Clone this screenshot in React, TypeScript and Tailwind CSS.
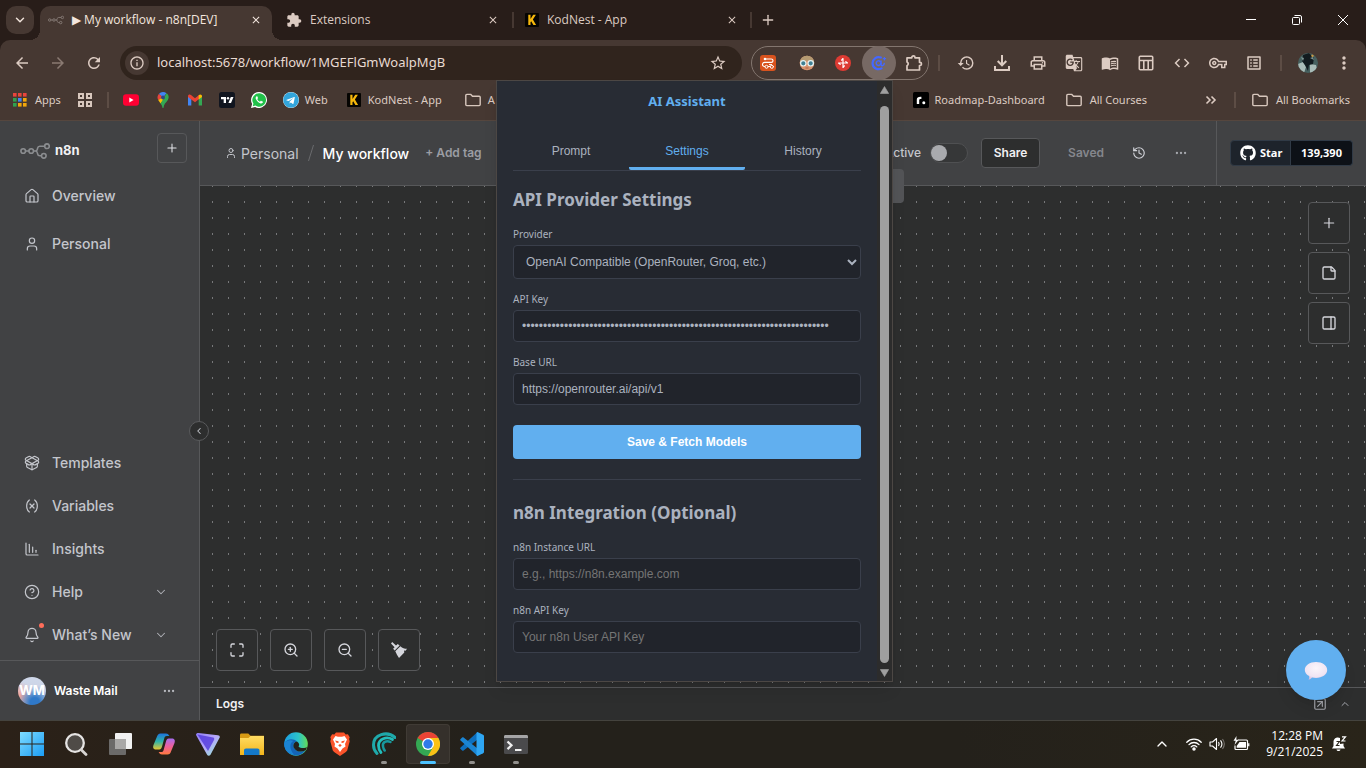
import type { ComponentType, ReactNode } from 'react';
import {
  Bell,
  ChartColumnDecreasing,
  ChevronDown,
  ChevronLeft,
  ChevronUp,
  CircleHelp,
  Ellipsis,
  History,
  House,
  Maximize,
  PackageOpen,
  PanelRight,
  Plus,
  SquareArrowUpRight,
  StickyNote,
  User,
  Variable,
  ZoomIn,
  ZoomOut,
} from 'lucide-react';
import {
  MdArrowBack,
  MdArrowForward,
  MdClose,
  MdCode,
  MdExtension,
  MdGTranslate,
  MdHistory,
  MdInfoOutline,
  MdMoreVert,
  MdOutlineListAlt,
  MdOutlineMenuBook,
  MdOutlinePrint,
  MdOutlineVpnKey,
  MdRefresh,
  MdStarBorder,
} from 'react-icons/md';
import { FaGithub, FaTelegram } from 'react-icons/fa';

/* ---------- shared drawings ---------- */

function N8nMark({ className }: { className: string }) {
  return (
    <svg className={className} viewBox="0 0 30 16" fill="none" stroke="currentColor" strokeWidth="1.6" aria-hidden="true">
      <circle cx="3.2" cy="8" r="2.3" />
      <circle cx="11.2" cy="8" r="2.3" />
      <circle cx="27" cy="3.2" r="2.3" />
      <circle cx="23.8" cy="12.8" r="2.3" />
      <path d="M5.5 8h3.4M13.5 8h1.7c1.4 0 2-.7 2.2-1.9l.2-1c.2-1.2 1-1.9 2.2-1.9h4.9M15.2 8c1.4 0 2 .7 2.2 1.9l.2 1c.2 1.2 1 1.9 2.2 1.9h1.7" />
    </svg>
  );
}

function KodNest({ className }: { className: string }) {
  return (
    <svg className={className} viewBox="0 0 14 14" aria-hidden="true">
      <rect width="14" height="14" rx="1" fill="#050402" />
      <path d="M3.3 1.8h2.2v4.3l2.7-4.3h2.7L7.9 6.600l3.200 5.500H8.400L6.200 8.200l-.7 1v2.900H3.300z" fill="#f5b70c" />
    </svg>
  );
}

function Folder() {
  return (
    <svg className="h-4 w-4 shrink-0" viewBox="0 0 16 16" fill="none" stroke="#d8c7bd" strokeWidth="1.4" aria-hidden="true">
      <path d="M.8 3.400c0-.6.4-1 1-1h4l1.700 1.800h6.700c.6 0 1 .4 1 1v7.400c0 .6-.4 1-1 1H1.800c-.6 0-1-.4-1-1z" />
    </svg>
  );
}

/* ---------- browser chrome ---------- */

function TabStrip() {
  return (
    <div className="flex h-10 items-start bg-[#281d19] pl-1.5 pt-1.5 text-[#dccbc2]">
      <button aria-label="Search tabs" className="flex h-7 w-7 items-center justify-center rounded-[10px] bg-[#463832] text-[#efe2da]">
        <ChevronDown className="h-3.5 w-3.5" strokeWidth={2.5} />
      </button>
      <div className="relative ml-1.5 flex h-[34px] w-[232px] items-center rounded-t-[10px] bg-[#463832] pb-1.5 pl-2 pr-2.5 before:absolute before:-left-2.5 before:bottom-0 before:size-2.5 before:bg-[radial-gradient(circle_at_0_0,transparent_10px,#463832_10px)] after:absolute after:-right-2.5 after:bottom-0 after:size-2.5 after:bg-[radial-gradient(circle_at_100%_0,transparent_10px,#463832_10px)]">
        <N8nMark className="h-4 w-4 text-[#8b807b]" />
        <span className="ml-2 flex-1 whitespace-nowrap text-[#f3e6df]">▶ My workflow - n8n[DEV]</span>
        <button aria-label="Close tab" className="text-[#f3e6df]"><MdClose className="h-3 w-3" /></button>
      </div>
      <div className="flex h-7 w-[242px] items-center">
        <MdExtension className="ml-3.5 h-4 w-4" />
        <span className="ml-2 flex-1">Extensions</span>
        <button aria-label="Close tab" className="mr-[13px]"><MdClose className="h-3 w-3" /></button>
        <span className="h-4 w-0.5 bg-[#463832]" />
      </div>
      <div className="flex h-7 w-[238px] items-center">
        <KodNest className="ml-[11px] h-3.5 w-3.5" />
        <span className="ml-2 flex-1">KodNest - App</span>
        <button aria-label="Close tab" className="mr-3"><MdClose className="h-3 w-3" /></button>
        <span className="h-4 w-0.5 bg-[#463832]" />
      </div>
      <button aria-label="New tab" className="flex h-7 w-8 items-center justify-center">
        <Plus className="h-4 w-4" />
      </button>
      <div className="ml-auto flex h-7 text-white">
        <button aria-label="Minimize" className="flex w-[46px] items-center justify-center">
          <svg className="h-2.5 w-2.5" viewBox="0 0 10 10" stroke="currentColor"><path d="M0 4.5h10" /></svg>
        </button>
        <button aria-label="Restore" className="flex w-[46px] items-center justify-center">
          <svg className="h-2.5 w-2.5" viewBox="0 0 10 10" fill="none" stroke="currentColor">
            <rect x=".5" y="2.5" width="7" height="7" rx="1" />
            <path d="M2.5.5H8A1.5 1.5 0 0 1 9.5 2v5.500" />
          </svg>
        </button>
        <button aria-label="Close window" className="flex w-[46px] items-center justify-center">
          <svg className="h-2.5 w-2.5" viewBox="0 0 10 10" stroke="currentColor"><path d="M0 0l10 10M10 0L0 10" /></svg>
        </button>
      </div>
    </div>
  );
}

function ToolButton({ label, children }: { label: string; children: ReactNode }) {
  return (
    <button aria-label={label} className="flex h-9 w-9 shrink-0 items-center justify-center">
      {children}
    </button>
  );
}

function DownloadTray({ className }: { className?: string }) {
  return (
    <svg className={className} viewBox="0 0 18 18" fill="none" stroke="currentColor" strokeWidth="2">
      <path d="M9 1v10M4.700 7L9 11.300 13.300 7M2 12v4h14v-4" />
    </svg>
  );
}

function TableLayout({ className }: { className?: string }) {
  return (
    <svg className={className} viewBox="0 0 18 18" fill="none" stroke="currentColor" strokeWidth="1.600">
      <rect x="2.300" y="2.300" width="13.400" height="13.400" rx="1" />
      <path d="M2 6.500h14M6.800 6.500V16M11.200 6.500V16" />
    </svg>
  );
}

const pinned: [string, ComponentType<{ className?: string }>][] = [
  ['History', MdHistory],
  ['Downloads', DownloadTray],
  ['Print', MdOutlinePrint],
  ['Translate', MdGTranslate],
  ['Reading mode', MdOutlineMenuBook],
  ['Layout', TableLayout],
  ['Developer tools', MdCode],
  ['Passwords', MdOutlineVpnKey],
  ['Reading list', MdOutlineListAlt],
];

function Toolbar() {
  return (
    <div className="bg-[#281d19]">
      <div className="flex h-[46px] items-center rounded-t-[10px] bg-[#463832] px-1 text-[#dccbc2]">
        <ToolButton label="Back"><MdArrowBack className="h-[18px] w-[18px]" /></ToolButton>
        <ToolButton label="Forward"><MdArrowForward className="h-[18px] w-[18px] text-[#8a7a72]" /></ToolButton>
        <ToolButton label="Reload"><MdRefresh className="h-[18px] w-[18px]" /></ToolButton>
        <div className="ml-2 flex h-[34px] flex-1 items-center rounded-full bg-[#30241d] pl-[5px] pr-[15px]">
          <button aria-label="Site information" className="flex h-6 w-6 items-center justify-center rounded-full bg-[#463832]">
            <MdInfoOutline className="h-4 w-4" />
          </button>
          <input
            aria-label="Address"
            className="ml-2 min-w-0 flex-1 bg-transparent font-['Noto_Sans',sans-serif] text-[13px] text-[#e8dad2] outline-none"
            defaultValue="localhost:5678/workflow/1MGEFlGmWoalpMgB"
          />
          <button aria-label="Bookmark"><MdStarBorder className="h-[18px] w-[18px]" /></button>
        </div>
        <div className="ml-[9px] flex h-[34px] w-[178px] items-center rounded-full border border-[#83766f] pl-px">
          <button aria-label="Workflow extension" className="flex flex-1 pl-[7px]">
            <svg className="h-4 w-4" viewBox="0 0 16 16" fill="none">
              <rect width="16" height="16" rx="3" fill="#d9531e" />
              <path d="M5 4h6.300a1.700 1.700 0 0 1 0 3.400H4.500a2 2 0 0 0 0 4.100h9.500" stroke="#fff" strokeWidth="1.100" />
              <circle cx="5" cy="4" r="1.300" fill="#fff" />
              <circle cx="6.500" cy="11.800" r="1.500" stroke="#fff" fill="#d9531e" />
              <circle cx="11.800" cy="11.800" r="1.500" stroke="#fff" fill="#d9531e" />
              <path d="M9 9.600h3" stroke="#fff" />
            </svg>
          </button>
          <button aria-label="Goggles extension" className="flex w-9 shrink-0 justify-center">
            <svg className="h-4 w-4" viewBox="0 0 16 16">
              <circle cx="8" cy="8" r="7.300" fill="#d8946f" />
              <path d="M.7 8a7.300 7.300 0 0 1 14.600 0c-4-3-10.600-3-14.600 0z" fill="#b49a72" />
              <circle cx="4.300" cy="8.300" r="2.700" fill="#3f7f93" stroke="#e6f3f4" strokeWidth="1.200" />
              <circle cx="11.700" cy="8.300" r="2.700" fill="#3f7f93" stroke="#e6f3f4" strokeWidth="1.200" />
              <path d="M6.500 13h3" stroke="#a65f45" />
            </svg>
          </button>
          <button aria-label="Fan extension" className="flex w-9 shrink-0 justify-center">
            <svg className="h-4 w-4" viewBox="0 0 16 16">
              <circle cx="8" cy="8" r="8" fill="#dd3b33" />
              <g fill="none" stroke="#fff" strokeWidth="1.200" strokeLinecap="round" strokeLinejoin="round">
                <path d="M8 8V3.500L6.600 5.200M8 8h4.500l-1.700-1.400M8 8v4.500l1.400-1.700M8 8H3.500l1.700 1.400" />
              </g>
            </svg>
          </button>
          <button aria-label="AI Assistant extension" className="flex w-9 shrink-0 justify-center">
            <span className="-my-px flex h-[34px] w-[34px] items-center justify-center rounded-full bg-[#776964]">
              <svg className="h-4 w-4" viewBox="0 0 16 16" fill="none" stroke="#4468ff" strokeLinecap="round">
                <path d="M10.500 13.400A6 6 0 1 1 9.800 2.600" strokeWidth="2.200" />
                <path d="M10 6v3.600c.3 1.700 3 1.400 3.200-1.100" strokeWidth="1.500" />
                <path d="M9.800 8.200a2.300 2.300 0 1 1-.7-1.700" strokeWidth="1.500" />
                <path d="M13.400 2.500v2.400M12.200 3.700h2.400" strokeWidth="1.200" />
              </svg>
            </span>
          </button>
          <button aria-label="Extensions" className="flex flex-1 justify-center pl-0.5">
            <svg className="h-[18px] w-[18px]" viewBox="0 0 18 18" fill="none" stroke="currentColor" strokeWidth="1.700" strokeLinejoin="round">
              <path d="M2 3.800h4.800V3.400a1.600 1.600 0 0 1 3.200 0v.4h4.500v4.500h.4a1.600 1.600 0 0 1 0 3.200h-.4v4.500H2v-4.300a2 2 0 0 0 0-3.700z" />
            </svg>
          </button>
        </div>
        <span className="ml-[9px] mr-2 h-4 w-0.5 shrink-0 bg-[#5d4d45]" />
        {pinned.map(([label, Icon]) => (
          <ToolButton key={label} label={label}><Icon className="h-[18px] w-[18px]" /></ToolButton>
        ))}
        <span className="mx-2 h-4 w-0.5 shrink-0 bg-[#5d4d45]" />
        <ToolButton label="Profile">
          <svg className="h-5 w-5 rounded-full" viewBox="0 0 20 20">
            <rect width="20" height="20" fill="#46605f" />
            <path d="M0 11l5-2 3 5-2 6H0zM12 11l6 1 2 8h-8z" fill="#a9bcb8" />
            <path d="M5 2l6-2 5 5-1 6-4 1-1 6-3-6-3-4z" fill="#121b1f" />
            <path d="M3 4l3 1-1 3zM12 5l3-1 1 3z" fill="#7d9693" />
            <circle cx="14.5" cy="2.800" r="1.200" fill="#c99a46" />
          </svg>
        </ToolButton>
        <ToolButton label="Menu"><MdMoreVert className="h-5 w-5" /></ToolButton>
      </div>
    </div>
  );
}

const appDots = ['#e8453c', '#e8453c', '#e8453c', '#2fa24f', '#4285f4', '#f2a60c', '#2fa24f', '#f2a60c', '#f2a60c'];

function BookmarksBar() {
  return (
    <nav aria-label="Bookmarks" className="flex h-[35px] items-center border-b border-[#55463e] bg-[#463832] pb-1.5 pl-[13px] pr-4 font-['Noto_Sans',sans-serif] text-[11px] text-[#dccbc2]">
      <a href="#apps" className="flex items-center gap-2">
        <svg className="h-3.5 w-3.5" viewBox="0 0 14 14">
          {appDots.map((fill, i) => (
            <rect key={i} x={(i % 3) * 5} y={Math.floor(i / 3) * 5} width="3.600" height="3.600" fill={fill} />
          ))}
        </svg>
        Apps
      </a>
      <button aria-label="Tab groups" className="ml-4">
        <svg className="h-4 w-4" viewBox="0 0 16 16" fill="none" stroke="#d8c7bd" strokeWidth="2">
          <rect x="2" y="2" width="4" height="4" />
          <rect x="10" y="2" width="4" height="4" />
          <rect x="2" y="10" width="4" height="4" />
          <rect x="10" y="10" width="4" height="4" />
        </svg>
      </button>
      <span className="mx-3.5 h-4 w-0.5 bg-[#5d4d45]" />
      <div className="flex items-center gap-4">
        <a href="#youtube" aria-label="YouTube">
          <svg className="h-4 w-4" viewBox="0 0 16 16"><rect y="2.200" width="16" height="11.600" rx="3" fill="#ff0033" /><path d="M6.300 5.500v5l4.300-2.500z" fill="#fff" /></svg>
        </a>
        <a href="#maps" aria-label="Maps">
          <svg className="h-4 w-4" viewBox="0 0 16 16">
            <path d="M8 0a5.500 5.500 0 0 0-4.200 2L8 5.500l3.500-4.200A5.500 5.500 0 0 0 8 0z" fill="#4285f4" />
            <path d="M3.800 2a5.500 5.500 0 0 0-.6 6L8 5z" fill="#e8453c" />
            <path d="M3.200 8c.7 1.300 1.600 2.200 2.400 3.400L11.800 4 8 5z" fill="#fbbc04" />
            <path d="M11.500 1.300c3 2 2.400 5.200 1 7.200C10.700 11 9 12 8.600 15.400c-.2.800-1 .8-1.200 0-.3-1.700-.9-2.700-1.800-4z" fill="#34a853" />
            <circle cx="8" cy="5.400" r="2" fill="#2c4a86" />
          </svg>
        </a>
        <a href="#mail" aria-label="Gmail">
          <svg className="h-4 w-4" viewBox="0 0 16 16">
            <path d="M1 4v9.500h3.300V7z" fill="#4285f4" />
            <path d="M15 4v9.500h-3.300V7z" fill="#34a853" />
            <path d="M1 4.300C1 2.500 2.700 2 4 3l4 3.200L12 3v4L8 10.200 1 5z" fill="#ea4335" />
            <path d="M11.700 3.200C13.200 2 15 2.700 15 4.500V5l-3.300 2.500z" fill="#fbbc04" />
          </svg>
        </a>
        <a href="#tradingview" aria-label="TradingView">
          <svg className="h-4 w-4" viewBox="0 0 16 16"><rect width="16" height="16" rx="2.500" fill="#11151f" /><path d="M2 5h5v6H4.700V7.300H2zM11.800 5h2.700l-2.500 6H9.400z" fill="#fff" /><circle cx="9" cy="6.200" r="1.200" fill="#fff" /></svg>
        </a>
        <a href="#whatsapp" aria-label="WhatsApp">
          <svg className="h-4 w-4" viewBox="0 0 16 16">
            <path d="M8 0a8 8 0 0 0-6.900 12L0 16l4.100-1A8 8 0 1 0 8 0z" fill="#fff" />
            <path d="M8 1.300a6.700 6.700 0 0 0-5.600 10.300l-.6 2.600 2.700-.7A6.700 6.700 0 1 0 8 1.300z" fill="#22c14a" />
            <path d="M5.700 4.200c-1 .5-1.300 1.600-.8 2.800.8 1.900 2.300 3.400 4.200 4.200 1.300.5 2.400.1 2.800-.9.1-.4 0-.6-.3-.8l-1.300-.6c-.3-.2-.5-.1-.7.1l-.6.7C7.700 9.200 6.800 8.300 6.300 7l.5-.6c.2-.2.2-.4.1-.7l-.5-1.200c-.2-.3-.4-.4-.7-.3z" fill="#fff" />
          </svg>
        </a>
      </div>
      <a href="#web" className="ml-4 flex items-center gap-1.5">
        <span className="rounded-full bg-white"><FaTelegram className="h-4 w-4 text-[#32a5dc]" /></span>
        Web
      </a>
      <a href="#kodnest" className="ml-[19px] flex items-center gap-[7px]">
        <KodNest className="h-3.5 w-3.5" />
        KodNest - App
      </a>
      <a href="#folder" className="ml-[23px] flex items-center gap-[7px]"><Folder />A</a>
      <a href="#roadmap" className="ml-auto flex items-center gap-1.5">
        <svg className="h-4 w-4" viewBox="0 0 16 16"><rect width="16" height="16" rx="1.500" fill="#000" /><path d="M3.800 12V7.500c0-2.300 1.700-3 4.600-2.800v2.200c-1.500-.1-2.200.2-2.200 1.300V12z" fill="#fff" /><circle cx="10.800" cy="10.700" r="1.500" fill="#fff" /></svg>
        Roadmap-Dashboard
      </a>
      <a href="#courses" className="ml-[21px] flex items-center gap-2"><Folder />All Courses</a>
      <button aria-label="More bookmarks" className="ml-[57px] flex">
        <svg className="h-3.5 w-3.5" viewBox="0 0 14 14" fill="none" stroke="currentColor" strokeWidth="1.600"><path d="M2.500 3.500L6 7l-3.500 3.500M7.500 3.500L11 7l-3.500 3.500" /></svg>
      </button>
      <span className="mx-4 h-4 w-0.5 bg-[#5d4d45]" />
      <a href="#all" className="flex items-center gap-2"><Folder />All Bookmarks</a>
    </nav>
  );
}

/* ---------- n8n page ---------- */

type Item = { label: string; icon: ComponentType<{ className?: string; strokeWidth?: number }>; more?: boolean; badge?: boolean };

const topItems: Item[] = [
  { label: 'Overview', icon: House },
  { label: 'Personal', icon: User },
];
const bottomItems: Item[] = [
  { label: 'Templates', icon: PackageOpen },
  { label: 'Variables', icon: Variable },
  { label: 'Insights', icon: ChartColumnDecreasing },
  { label: 'Help', icon: CircleHelp, more: true },
  { label: 'What’s New', icon: Bell, more: true, badge: true },
];

function NavItem({ item }: { item: Item }) {
  const Icon = item.icon;
  return (
    <a href={'#' + item.label} className="flex items-center pl-6 pr-[31px] text-[14px] leading-5 font-medium text-[#c4c6cc]">
      <span className="relative mr-3">
        <Icon className="h-4 w-4" strokeWidth={1.8} />
        {item.badge && <span className="absolute -right-1 -top-1 h-[5px] w-[5px] rounded-full bg-[#ff6d5a]" />}
      </span>
      {item.label}
      {item.more && <ChevronDown className="ml-auto h-3.5 w-3.5 text-[#b0b2b8]" strokeWidth={1.8} />}
    </a>
  );
}

function Sidebar() {
  return (
    <aside className="relative flex w-[200px] shrink-0 flex-col border-r border-[#57585a] bg-[#414244]">
      <div className="flex items-center pl-5 pr-3 pt-3">
        <a href="#home" className="flex items-center gap-[5px] pt-1.5 text-[13px] font-bold text-[#f2f2f4]">
          <N8nMark className="h-4 w-[30px] text-[#8b8d90]" />
          n8n
        </a>
        <button aria-label="Create" className="ml-auto flex h-[30px] w-[30px] items-center justify-center rounded-sm border border-[#57585a] text-[#e3e4e8]">
          <Plus className="h-3.5 w-3.5" strokeWidth={1.8} />
        </button>
      </div>
      <nav aria-label="Projects" className="mt-[23px] flex flex-col gap-7">
        {topItems.map((item) => <NavItem key={item.label} item={item} />)}
      </nav>
      <nav aria-label="Resources" className="mb-[15px] mt-auto flex flex-col gap-[23px]">
        {bottomItems.map((item) => <NavItem key={item.label} item={item} />)}
      </nav>
      <div className="flex h-[60px] items-center border-t border-[#57585a] pl-[18px] pr-[23px] text-[12px] font-semibold text-white">
        <span className="flex h-7 w-7 items-center justify-center rounded-full bg-[radial-gradient(circle_at_60%_90%,#2f78c8_15%,transparent_55%),radial-gradient(circle_at_5%_70%,#f2a9a0_5%,transparent_45%),linear-gradient(#cfd8ea,#c7cde0)] text-[13px] font-bold">WM</span>
        <span className="ml-2">Waste Mail</span>
        <button aria-label="User menu" className="ml-auto text-[#b5b7bd]"><Ellipsis className="h-3.5 w-3.5" /></button>
      </div>
      <button aria-label="Collapse sidebar" className="absolute -right-2.5 top-[300px] z-10 flex h-5 w-5 items-center justify-center rounded-full border border-[#5a5b5d] bg-[#2d2e2e] text-[#c4c6cc]">
        <ChevronLeft className="h-2.5 w-2.5" strokeWidth={2.5} />
      </button>
    </aside>
  );
}

function WorkflowHeader() {
  return (
    <header className="flex h-[65px] items-center border-b border-[#57585a] bg-[#414244] pl-[25px] text-[#c4c6cc]">
      <a href="#personal" className="flex items-center gap-1 text-[14px]">
        <User className="h-3 w-3" />
        Personal
      </a>
      <svg className="ml-[9px] h-4 w-[6px]" viewBox="0 0 6 16" stroke="#6a6b6e"><path d="M5.500 0L.5 16" /></svg>
      <h1 className="ml-[9px] text-[14px] font-medium text-white">My workflow</h1>
      <button className="ml-4 text-[12px] font-semibold text-[#9b9da3]">+ Add tag</button>
      <div className="ml-auto flex h-full items-center text-[12px] font-semibold">
        <label htmlFor="active" className="mr-[9px] font-medium">Active</label>
        <span className="relative flex h-5 w-[38px] items-center rounded-full border border-[#4f5052] bg-[#363738]">
          <input id="active" type="checkbox" className="absolute inset-0 cursor-pointer appearance-none rounded-full" />
          <span className="h-4 w-4 rounded-full bg-[#a9aaae]" />
        </span>
        <button className="ml-[13px] h-[30px] w-[59px] rounded-sm border border-[#57585a] bg-[#2d2e2e] text-[#f0f0f2]">Share</button>
        <span className="ml-7 text-[#85878d]">Saved</span>
        <button aria-label="Workflow history" className="ml-7 text-[#d0d2d8]"><History className="h-3.5 w-3.5" /></button>
        <button aria-label="Workflow menu" className="ml-7 text-[#a5a7ad]"><Ellipsis className="h-3.5 w-3.5" /></button>
        <div className="ml-7 flex h-full items-center border-l border-[#57585a] px-[13px] font-['Noto_Sans',sans-serif] text-[11px] font-bold text-white">
          <a href="#star" className="flex h-[26px] w-[61px] items-center gap-1 rounded-l-sm border border-[#303a46] bg-[#1d232b] pl-[9px]">
            <FaGithub className="h-4 w-4" />
            Star
          </a>
          <a href="#stars" className="flex h-[26px] w-[62px] items-center justify-center rounded-r-sm border border-l-0 border-[#303a46] bg-[#0d1117]">139,390</a>
        </div>
      </div>
    </header>
  );
}

function SquareButton({ label, children }: { label: string; children: ReactNode }) {
  return (
    <button aria-label={label} className="flex h-[42px] w-[42px] items-center justify-center rounded-sm border border-[#57585a] bg-[#2d2e2e] text-[#d5d6dc]">
      {children}
    </button>
  );
}

function Canvas() {
  return (
    <section aria-label="Canvas" className="relative flex flex-1 flex-col justify-between bg-[#2d2e2e] p-4">
      <svg className="absolute inset-0 h-full w-full" aria-hidden="true">
        <defs>
          <pattern id="dots" width="16" height="16" patternUnits="userSpaceOnUse">
            <rect x="12" y="15" width="1" height="1" fill="#77787a" />
            <rect x="12" y="0" width="1" height="1" fill="#77787a" />
          </pattern>
        </defs>
        <rect width="100%" height="100%" fill="url(#dots)" />
      </svg>
      <div className="absolute -top-[17px] left-1/2 h-[34px] w-[242px] -translate-x-1/2 rounded bg-[#535457]" />
      <div className="relative flex flex-col gap-2 self-end">
        <SquareButton label="Add node"><Plus className="h-4 w-4" strokeWidth={1.8} /></SquareButton>
        <SquareButton label="Add sticky note"><StickyNote className="h-4 w-4" /></SquareButton>
        <SquareButton label="Toggle panel"><PanelRight className="h-4 w-4" /></SquareButton>
      </div>
      <div className="relative flex gap-3">
        <SquareButton label="Fit view"><Maximize className="h-4 w-4" /></SquareButton>
        <SquareButton label="Zoom in"><ZoomIn className="h-4 w-4" /></SquareButton>
        <SquareButton label="Zoom out"><ZoomOut className="h-4 w-4" /></SquareButton>
        <SquareButton label="Tidy up">
          <svg className="h-4 w-4" viewBox="0 0 16 16" fill="currentColor">
            <path d="M1.200 0L5 3.600 6.800 1.900 8.600 3.500 3.700 8.400 2.100 6.700l1.500-1.500L0 1.400z" />
            <path d="M9.400 4.200c2 1.900 4 2.600 6.600 2.600l-1.400 2-1.600-.2.300 1.900L8 16c-1.500-2-2.700-4.200-3.700-6.800z" />
          </svg>
        </SquareButton>
      </div>
    </section>
  );
}

/* ---------- extension popup ---------- */

const fieldClass =
  'h-8 w-full rounded border border-[#3a3f4b] bg-[#21242b] px-2 font-["Liberation_Sans",Arial,sans-serif] text-[12px] text-[#abb2bf] outline-none placeholder:text-[#757575]';

function Field({ id, label, type = 'text', value, placeholder }: { id: string; label: string; type?: string; value?: string; placeholder?: string }) {
  return (
    <div className="mt-3">
      <label htmlFor={id} className="mb-[3px] block text-[10px] leading-4">{label}</label>
      <input id={id} type={type} defaultValue={value} placeholder={placeholder} className={fieldClass} />
    </div>
  );
}

function AssistantPopup() {
  const tab = 'h-[39px] flex-1 rounded-b-[2px] border-b-[3px] pt-1';
  return (
    <div className="absolute left-[496px] top-20 z-20 flex w-[397px] border border-[#4c4744] bg-[#282c34] font-['Noto_Sans',sans-serif] text-[#abb2bf] shadow-lg">
      <div className="flex-1 px-4 pb-7 pt-2.5">
        <h2 className="text-center text-[13px] leading-5 font-bold text-[#61afef]">AI Assistant</h2>
        <div className="mt-5 flex border-b border-[#3a3f4b] font-['Liberation_Sans',Arial,sans-serif] text-[12px]">
          <button className={tab + ' border-transparent'}>Prompt</button>
          <button className={tab + ' border-[#61afef] text-[#61afef]'}>Settings</button>
          <button className={tab + ' border-transparent'}>History</button>
        </div>
        <h3 className="mt-[17px] text-[17px] leading-6 font-bold">API Provider Settings</h3>
        <div className="mt-3.5">
          <label htmlFor="provider" className="mb-[3px] block text-[10px] leading-4">Provider</label>
          <select id="provider" className="h-[34px] w-full rounded border border-[#3a3f4b] bg-[#21242b] px-2 font-['Liberation_Sans',Arial,sans-serif] text-[12px] text-[#abb2bf]">
            <option>OpenAI Compatible (OpenRouter, Groq, etc.)</option>
          </select>
        </div>
        <Field id="key" label="API Key" type="password" value={'x'.repeat(73)} />
        <Field id="base" label="Base URL" value="https://openrouter.ai/api/v1" />
        <button className="mt-5 h-[34px] w-full rounded bg-[#61afef] font-['Liberation_Sans',Arial,sans-serif] text-[12px] font-bold text-white">Save &amp; Fetch Models</button>
        <hr className="mt-5 border-[#3a3f4b]" />
        <h3 className="mb-3.5 mt-[21px] text-[17px] leading-6 font-bold">n8n Integration (Optional)</h3>
        <Field id="n8n-url" label="n8n Instance URL" placeholder="e.g., https://n8n.example.com" />
        <Field id="n8n-key" label="n8n API Key" placeholder="Your n8n User API Key" />
      </div>
      <div className="flex w-[15px] flex-col items-center bg-[#2c2c2c] pb-1 pt-[5px]" aria-hidden="true">
        <svg className="h-2 w-[9px]" viewBox="0 0 9 8"><path d="M4.500.5L8.700 7.500H.3z" fill="#9f9f9f" stroke="#9f9f9f" strokeWidth=".6" strokeLinejoin="round" /></svg>
        <div className="mb-1.5 mt-3 w-[9px] flex-1 rounded-full bg-[#9f9f9f]" />
        <svg className="h-2 w-[9px]" viewBox="0 0 9 8"><path d="M4.500 7.500L8.700.5H.3z" fill="#9f9f9f" stroke="#9f9f9f" strokeWidth=".6" strokeLinejoin="round" /></svg>
      </div>
    </div>
  );
}

/* ---------- taskbar ---------- */

function TaskApp({ label, open, active, children }: { label: string; open?: boolean; active?: boolean; children: ReactNode }) {
  return (
    <button
      aria-label={label}
      className={'relative flex h-10 w-11 items-center justify-center rounded ' + (active ? 'bg-[#35302b] ring-1 ring-[#403b35] ring-inset' : '')}
    >
      <svg className="h-6 w-6" viewBox="0 0 24 24">{children}</svg>
      {open && <span className="absolute bottom-0 h-[3px] w-1.5 rounded-full bg-[#92908d]" />}
      {active && <span className="absolute bottom-0 h-[3px] w-4 rounded-full bg-[#4cc2ff]" />}
    </button>
  );
}

function Taskbar() {
  return (
    <footer className="flex h-12 items-center border-t border-[#44433e] bg-[linear-gradient(90deg,#2b2118,#24211b_35%,#24211b_70%,#292419)] pb-0.5 pl-2.5 pr-[19px] text-[12px] text-white">
      <svg className="absolute h-0 w-0" aria-hidden="true">
        <defs>
          <linearGradient id="win" x1="0" y1="0" x2="1" y2="1"><stop stopColor="#7edcff" /><stop offset="1" stopColor="#1b9df5" /></linearGradient>
          <linearGradient id="copL" x1="0" y1="0" x2="0" y2="1"><stop stopColor="#1c74dd" /><stop offset=".5" stopColor="#2fb3a8" /><stop offset="1" stopColor="#e8c832" /></linearGradient>
          <linearGradient id="copR" x1="0" y1="0" x2="0" y2="1"><stop stopColor="#a66df0" /><stop offset=".5" stopColor="#ee5f9a" /><stop offset="1" stopColor="#ff7a3d" /></linearGradient>
          <linearGradient id="vpn" x1="0" y1="0" x2="1" y2="1"><stop stopColor="#8f7df5" /><stop offset=".5" stopColor="#b7a8fa" /><stop offset="1" stopColor="#8ef0cf" /></linearGradient>
          <linearGradient id="fold" x1="0" y1="0" x2="0" y2="1"><stop stopColor="#ffdc63" /><stop offset="1" stopColor="#f3b51b" /></linearGradient>
          <linearGradient id="edge" x1="0" y1="0" x2="1" y2="0"><stop stopColor="#1b9de2" /><stop offset=".6" stopColor="#2cc4c9" /><stop offset="1" stopColor="#63dd58" /></linearGradient>
        </defs>
      </svg>
      <TaskApp label="Start"><path d="M0 0h11.500v11.500H0zM12.500 0H24v11.500H12.500zM0 12.500h11.500V24H0zM12.500 12.500H24V24H12.500z" fill="url(#win)" /></TaskApp>
      <TaskApp label="Search">
        <circle cx="11" cy="11" r="8.800" fill="#4f4b47" stroke="#e6e4e3" strokeWidth="2.300" />
        <path d="M17.500 18l4.500 4.500" stroke="#d8d5d3" strokeWidth="2.800" strokeLinecap="round" />
      </TaskApp>
      <TaskApp label="Task view">
        <rect x="7" y="1" width="17" height="16" rx="1" fill="#f1f1f1" />
        <rect x="1" y="7" width="17" height="16" rx="1" fill="#6b6a69" />
        <path d="M7 7h11v10H7z" fill="#a9a8a7" />
      </TaskApp>
      <TaskApp label="Copilot">
        <path d="M14 1.500H8.500C6.500 1.500 5.500 3 5 4.600L1.500 13c-1 3 .2 4.500 2.600 4.500h3c2 0 2.500-1.500 3-3.200l2.200-8c.4-1.500 1-2.300 2.600-2.300h2.500C16.500 2.300 15.500 1.500 14 1.500z" fill="url(#copL)" />
        <path d="M10 22.500h5.500c2 0 3-1.500 3.500-3.100l3.500-8.400c1-3-.2-4.500-2.600-4.500h-3c-2 0-2.500 1.500-3 3.200l-2.200 8C11.300 19.200 10.700 20 9.100 20H6.600c.9 1.700 1.900 2.500 3.400 2.500z" fill="url(#copR)" />
      </TaskApp>
      <TaskApp label="VPN">
        <path d="M2.500 1L22 3.300c1.700.3 2.300 1.500 1.300 3L14.500 22.700c-1 1.600-2.700 1.500-3.400 0L.3 3.500C-.5 2 .8.800 2.500 1z" fill="url(#vpn)" />
        <path d="M1.500 2.500L17 5.500c1.300.3 1.600 1.300 1 2.500l-6 11z" fill="#5138dc" opacity=".8" />
      </TaskApp>
      <TaskApp label="File Explorer">
        <path d="M0 3c0-.8.500-1.500 1.300-1.500h7l2.200 2.300H24V12H0z" fill="#d79a14" />
        <path d="M0 6h8.500l2-2H24v19H0z" fill="url(#fold)" />
        <path d="M4 23v-4.500c0-1.200.8-2 2-2h11.500c1.200 0 2 .8 2 2V23z" fill="#1479c9" />
      </TaskApp>
      <TaskApp label="Edge">
        <circle cx="12" cy="12" r="11.800" fill="url(#edge)" />
        <path d="M.3 11C3 6.500 9.500 6 13 9.500c-3.500.5-4.600 3.500-3 6.500 2.200 4 7.200 4.500 11.700 2.300A11.800 11.800 0 0 1 .3 11z" fill="#1464b8" />
        <path d="M13 9.500c-3 .5-4.600 3.500-3 6.500 2.200 4 7.200 4.500 11.700 2.300l1.500-3.200c-2 1.300-7 1.400-8.700-.6 1.300-1.300.8-3.700-1.500-5z" fill="#24211b" />
        <path d="M.3 11c2-2.500 6-3.500 9.200-2-4 1.500-4.500 8 .5 13.600C3.500 21.500 0 17 .3 11z" fill="#1b84d4" />
      </TaskApp>
      <TaskApp label="Brave">
        <path d="M8 .5h8l1.700 2 2.200-.2 1.800 3-.6 1.700.6 2.300-2.500 9.200-1.300 1.500L12 24l-5.900-4-1.300-1.500L2.300 9.300 2.900 7l-.6-1.700 1.800-3 2.200.2z" fill="#fb542b" />
        <path d="M7.500 4l2.500.8h4l2.500-.8 2.500 3.500-2 4.500.5 2.500-3 2-2.500 3.500-2.500-3.500-3-2 .5-2.500-2-4.500z" fill="#fff" />
        <path d="M7 8.500l3.500.8v1.800l-2-.4zM17 8.500l-3.500.8v1.800l2-.4zM12 12l1.800 1.300L12 15l-1.800-1.700z" fill="#fb542b" />
      </TaskApp>
      <TaskApp label="Fan" open>
        <g fill="none" strokeLinecap="round">
          <path d="M23 5.500C15-1.500 1.500 2.500 1.500 13c0 3 1.200 6 3.500 8.500" stroke="#1fa9aa" strokeWidth="3" />
          <path d="M20.500 7.500c-6-3.500-14-.5-14 6 0 2.500.8 5 2.500 7" stroke="#23bdbb" strokeWidth="2.800" />
          <path d="M18.500 10c-4-2-8.500 0-7.500 4.500.3 1.500.7 3 1.700 4" stroke="#18979c" strokeWidth="2.500" />
        </g>
      </TaskApp>
      <TaskApp label="Chrome" active>
        <circle cx="12" cy="12" r="12" fill="#34a853" />
        <path d="M12 12L1.600 6A12 12 0 0 1 22.400 6z" fill="#ea4335" />
        <path d="M12 6h10.400A12 12 0 0 1 12 24l5.200-9z" fill="#fbc116" />
        <circle cx="12" cy="12" r="6" fill="#fff" />
        <circle cx="12" cy="12" r="4.700" fill="#2f7bea" />
      </TaskApp>
      <TaskApp label="Visual Studio Code" open>
        <path d="M17.500 0L.6 15.400c-.6.500-.6 1.200 0 1.700l1.500 1.400c.5.400 1 .4 1.500.1L17.500 7.500z" fill="#0d6fbe" />
        <path d="M17.500 24L.6 8.600c-.6-.5-.6-1.200 0-1.700l1.500-1.400c.5-.4 1-.4 1.500-.1l13.900 11.100z" fill="#1b85d3" />
        <path d="M17.500 0l5.600 2.700c.6.300.9.800.9 1.400v15.800c0 .6-.3 1.100-.9 1.400L17.500 24c-.8-.2-1-.8-1-1.500v-21c0-.7.3-1.300 1-1.500z" fill="#2ea6f3" />
      </TaskApp>
      <TaskApp label="Terminal" open>
        <rect y="3" width="24" height="19" rx="1.500" fill="#4a4a4c" />
        <path d="M0 4.500C0 3.700.7 3 1.500 3h21c.8 0 1.500.7 1.500 1.500V6H0z" fill="#a5a5a6" />
        <path d="M3.500 9.500l4 3.800-4 3.800M11 18h6.500" fill="none" stroke="#f0f0f0" strokeWidth="2.200" />
      </TaskApp>
      <div className="ml-auto flex items-center">
        <button aria-label="Show hidden icons"><ChevronUp className="h-4 w-4" /></button>
        <button aria-label="Network, sound and battery" className="ml-4 flex items-center gap-[7px]">
          <svg className="h-4 w-4" viewBox="0 0 16 16" fill="none" stroke="#fff" strokeWidth="1.300" strokeLinecap="round">
            <path d="M.8 6.200a10.200 10.200 0 0 1 14.400 0M3 8.600a7 7 0 0 1 10 0M5.200 10.900a4 4 0 0 1 5.600 0" />
            <circle cx="8" cy="13" r="1.100" fill="#fff" />
          </svg>
          <svg className="h-4 w-4" viewBox="0 0 16 16" fill="none" stroke="#fff" strokeWidth="1.100" strokeLinejoin="round">
            <path d="M1 6h2.500L7.500 2.500v11L3.500 10H1zM9.500 6c.8 1.200.8 2.800 0 4M11.500 4.300c1.700 2.200 1.700 5.200 0 7.400" />
            <path d="M13.500 3c2.200 3 2.200 7 0 10" stroke="#77736e" />
          </svg>
          <svg className="h-4 w-[18px]" viewBox="0 0 18 16" fill="none" stroke="#fff" strokeWidth="1.200">
            <path d="M6 4h8.500a1 1 0 0 1 1 1v7.500a1 1 0 0 1-1 1H4a1 1 0 0 1-1-1V9.500M16.800 7.200v3" />
            <path d="M7.500 6H14v5.700H4.700V10z" fill="#fff" stroke="none" />
            <path d="M4.500 0L1.500 4.800h2.200L2.500 9l4.200-5.200H4.300z" fill="#fff" stroke="none" />
          </svg>
        </button>
        <div className="ml-4 text-right leading-4">
          <div>12:28 PM</div>
          <div>9/21/2025</div>
        </div>
        <button aria-label="Notifications" className="ml-2">
          <svg className="h-4 w-4" viewBox="0 0 16 16" fill="#fff">
            <path d="M7 1.500C3.800 1.500 2.500 3.800 2.500 6.500V10L1 12.500h13L12.500 10V7.500L9 8V2zM5.500 13.500h4c-.5 2-3.500 2-4 0z" />
            <path d="M5.500 5.500h3l-3 4h3" fill="none" stroke="#292419" strokeWidth="1.100" />
            <path d="M11 .8h3.500L11 5h3.500" fill="none" stroke="#fff" strokeWidth="1.200" />
          </svg>
        </button>
      </div>
    </footer>
  );
}

export default function App() {
  return (
    <div className="relative flex min-h-screen flex-col overflow-hidden bg-[#2d2e2e] font-['Open_Sans','Noto_Sans',sans-serif] text-[12px]">
      <TabStrip />
      <Toolbar />
      <BookmarksBar />
      <main className="relative flex flex-1 font-['Inter',sans-serif]">
        <Sidebar />
        <div className="flex min-w-0 flex-1 flex-col">
          <WorkflowHeader />
          <Canvas />
          <div className="flex h-[33px] items-center border-t border-[#57585a] bg-[#2d2e2e] pl-4 pr-[15px] text-[12px] font-semibold text-[#f0f0f2]">
            Logs
            <div className="ml-auto flex items-center gap-3 text-[#a5a7ad]">
              <button aria-label="Pop out logs"><SquareArrowUpRight className="h-3.5 w-3.5" /></button>
              <button aria-label="Expand logs"><ChevronUp className="h-3 w-3" /></button>
            </div>
          </div>
        </div>
        <button aria-label="Open chat" className="absolute bottom-5 right-5 z-10 flex h-[60px] w-[60px] items-center justify-center rounded-full bg-[#61afef] shadow-lg">
          <svg className="h-6 w-6" viewBox="0 0 24 24">
            <defs>
              <radialGradient id="bubble" cx=".5" cy=".35" r=".7"><stop stopColor="#fbf6fb" /><stop offset=".7" stopColor="#f0e4f3" /><stop offset="1" stopColor="#cfb4dc" /></radialGradient>
            </defs>
            <path d="M12 4C5.700 4 .8 7.500.8 12c0 2.500 1.600 4.700 4.300 6.100.4 1.200.2 2.500-.6 3.600 1.500-.3 2.700-1.100 3.500-2.300 1.200.3 2.600.5 4 .5 6.300 0 11.200-3.400 11.200-7.900S18.300 4 12 4z" fill="url(#bubble)" />
          </svg>
        </button>
      </main>
      <Taskbar />
      <AssistantPopup />
    </div>
  );
}
